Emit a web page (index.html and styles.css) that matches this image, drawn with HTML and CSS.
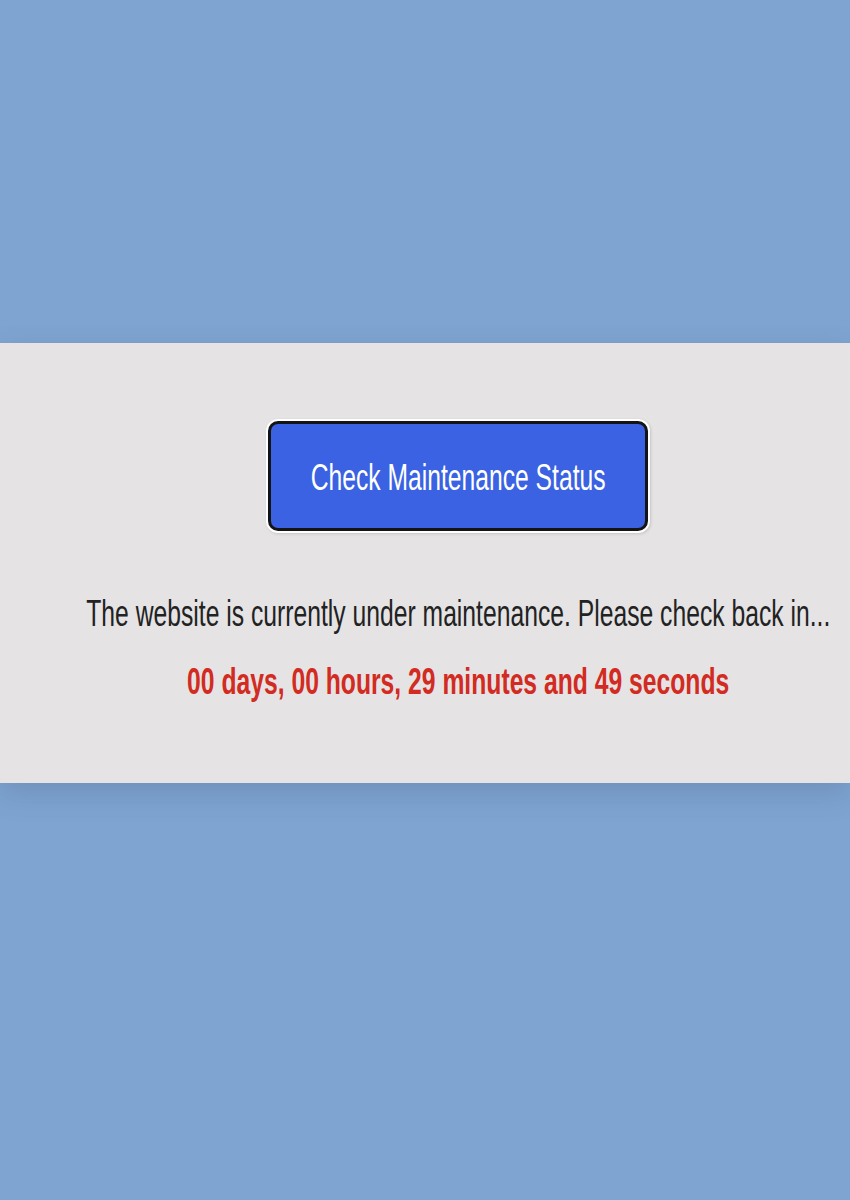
FILE: index.html
```html
<!DOCTYPE html>
<html lang="en">
<head>
<meta charset="utf-8">
<title>Maintenance</title>
<link rel="stylesheet" href="styles.css">
</head>
<body>
  <section class="band">
    <button class="status-btn" type="button"><span class="narrow">Check Maintenance Status</span></button>
    <p class="message"><span class="narrow wide">The website is currently under maintenance. Please check back in...</span></p>
    <p class="countdown"><span class="narrow wide">00 days, 00 hours, 29 minutes and 49 seconds</span></p>
  </section>
</body>
</html>
```
FILE: styles.css
```css
html, body {
  margin: 0;
  padding: 0;
}
body {
  background: #7fa4d1;
  height: 1200px;
  overflow: hidden;
  font-family: "Liberation Sans", Arial, sans-serif;
}
.band {
  margin-top: 343px;
  height: 440px;
  box-sizing: border-box;
  background: #e5e3e4;
  display: flex;
  flex-direction: column;
  align-items: center;
  padding: 78px 0 0 66px;
  box-shadow: 0 10px 28px rgba(40, 60, 90, 0.18);
}
.narrow {
  display: inline-block;
  white-space: nowrap;
  transform: scaleX(0.667);
  transform-origin: center;
}
.narrow.wide {
  transform: scaleX(0.686);
}
.status-btn {
  width: 380px;
  height: 110px;
  box-sizing: border-box;
  border: 3px solid #141414;
  border-radius: 10px;
  background: #3a62e2;
  color: #fff;
  font-family: "Liberation Sans", Arial, sans-serif;
  font-size: 37px;
  line-height: 37px;
  padding: 2px 0 0;
  display: flex;
  align-items: center;
  justify-content: center;
  box-shadow: 0 0 0 2px #fff, 1px 1px 3px 2px rgba(0, 0, 0, 0.14);
  cursor: pointer;
}
.message {
  margin: 65px 0 0;
  font-size: 36px;
  line-height: 36px;
  color: #222;
  display: flex;
  justify-content: center;
  width: 100%;
}
.countdown {
  margin: 32px 0 0;
  font-size: 36px;
  line-height: 36px;
  font-weight: bold;
  color: #d22b22;
  display: flex;
  justify-content: center;
  width: 100%;
}
```
